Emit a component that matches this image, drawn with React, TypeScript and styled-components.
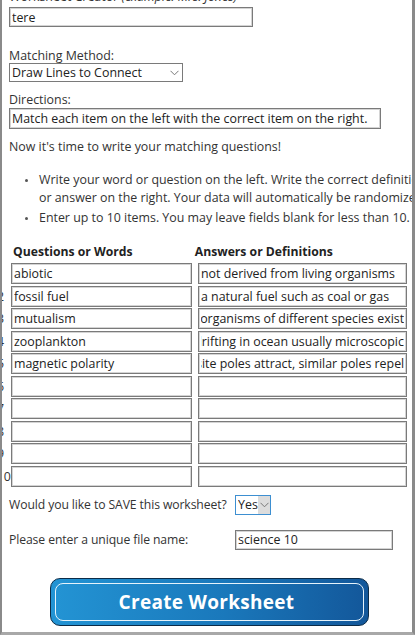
import React, { useLayoutEffect, useRef } from 'react';
import styled, { createGlobalStyle } from 'styled-components';

const GlobalStyle = createGlobalStyle`
  html, body {
    margin: 0;
    padding: 0;
    background: #fff;
    overflow: hidden;
  }
  body {
    font-family: "Open Sans", "Noto Sans", sans-serif;
    color: #333;
  }
`;

const Panel = styled.div`
  box-sizing: border-box;
  height: 635px;
  border-left: 2px solid #8a8a8a;
  border-right: 3px solid #8a8a8a;
  border-bottom: 3px solid #a8a8a8;
  padding-left: 7px;
  overflow: hidden;
  font-size: 12px;
`;

const Label = styled.div<{ $top?: number }>`
  font-size: 12.4px;
  line-height: 16px;
  color: #333;
  margin-top: ${p => p.$top ?? 0}px;
  white-space: nowrap;
`;

const Hint = styled.span`
  font-style: italic;
`;

const TextInput = styled.input<{ $w: number; $h?: number; $top?: number }>`
  display: block;
  box-sizing: border-box;
  width: ${p => p.$w}px;
  height: ${p => p.$h ?? 20}px;
  margin: ${p => p.$top ?? 0}px 0 0 0;
  padding: 0 2px;
  border: 1px solid #7a7a7a;
  box-shadow: inset 0 0 0 1px #d4d4d4;
  font-family: inherit;
  font-size: 12.4px;
  color: #222;
  background: #fff;
  outline: none;
`;

const SelectWrap = styled.div<{ $w: number; $top?: number; $focus?: boolean }>`
  position: relative;
  box-sizing: border-box;
  width: ${p => p.$w}px;
  margin-top: ${p => p.$top ?? 0}px;
  border: 1px solid ${p => (p.$focus ? '#3d8fd1' : '#7a7a7a')};
  background: #fff;
`;

const Select = styled.select<{ $h: number }>`
  appearance: none;
  display: block;
  width: 100%;
  height: ${p => p.$h}px;
  margin: 0;
  padding: 0 0 0 2px;
  border: none;
  background: transparent;
  font-family: inherit;
  font-size: 12.4px;
  color: #222;
  outline: none;
`;

const ArrowArea = styled.span<{ $shade?: boolean; $right?: number }>`
  position: absolute;
  top: 0;
  right: ${p => p.$right ?? 0}px;
  bottom: 0;
  width: 12px;
  display: flex;
  align-items: center;
  justify-content: center;
  background: ${p => (p.$shade ? '#dcdcdc' : 'transparent')};
  pointer-events: none;
`;

const Intro = styled.p`
  margin: 10px 0 0 0;
  font-size: 12.4px;
  line-height: 16px;
  white-space: nowrap;
`;

const Bullets = styled.ul`
  margin: 16px 0 0 0;
  padding: 0 0 0 30px;
  list-style: none;
`;

const Bullet = styled.li`
  position: relative;
  font-size: 12.4px;
  line-height: 18px;
  white-space: nowrap;
  margin-bottom: 2px;

  &::before {
    content: '';
    position: absolute;
    left: -14px;
    top: 8px;
    width: 3px;
    height: 3px;
    border-radius: 50%;
    background: #555;
  }
`;

const HeadRow = styled.div`
  display: flex;
  margin-top: 17px;
  line-height: 16px;
`;

const HeadCell = styled.div<{ $w: number; $pad: number }>`
  width: ${p => p.$w}px;
  padding-left: ${p => p.$pad}px;
  font-weight: 700;
  font-size: 12.2px;
  color: #222;
  white-space: nowrap;
`;

const Grid = styled.div`
  display: grid;
  grid-template-columns: 8px 181px 209px;
  column-gap: 6px;
  row-gap: 1.5px;
  margin: 3px 0 0 -12px;
`;

const Num = styled.div`
  font-size: 12.4px;
  line-height: 21px;
  color: #333;
  white-space: nowrap;
  letter-spacing: -0.3px;
`;

const CellInput = styled.input`
  box-sizing: border-box;
  width: 100%;
  height: 21px;
  margin: 0;
  padding: 0 2px;
  border: 1px solid #7a7a7a;
  box-shadow: inset 0 0 0 1px #d4d4d4;
  font-family: inherit;
  font-size: 12.4px;
  color: #222;
  background: #fff;
  outline: none;
`;

const FormRow = styled.div<{ $top: number }>`
  display: flex;
  align-items: center;
  margin-top: ${p => p.$top}px;
`;

const RowLabel = styled.div`
  width: 226px;
  font-size: 12.2px;
  line-height: 16px;
  letter-spacing: -0.1px;
  white-space: nowrap;
`;

const CreateButton = styled.button`
  display: block;
  box-sizing: border-box;
  width: 319px;
  height: 48px;
  margin: 28px 0 0 41px;
  padding: 4px;
  border: 1px solid #0c2c48;
  border-radius: 10px;
  background: linear-gradient(90deg, #2394d4 0%, #1a78bb 55%, #13579a 100%);
  cursor: pointer;
`;

const ButtonFace = styled.span`
  display: flex;
  align-items: center;
  justify-content: center;
  height: 100%;
  padding-right: 6px;
  border: 1.5px solid #e6f3fb;
  border-radius: 8px;
  box-sizing: border-box;
  font-family: "Open Sans", "Noto Sans", sans-serif;
  font-weight: 700;
  font-size: 19px;
  color: #fff;
  letter-spacing: 0.3px;
`;

const Chevron: React.FC = () => (
  <svg width="9" height="6" viewBox="0 0 9 6">
    <path d="M0.5 0.8 L4.5 4.8 L8.5 0.8" fill="none" stroke="#777" strokeWidth="1" />
  </svg>
);

const EndInput: React.FC<{ value: string }> = ({ value }) => {
  const ref = useRef<HTMLInputElement>(null);
  useLayoutEffect(() => {
    if (ref.current) ref.current.scrollLeft = ref.current.scrollWidth;
  }, [value]);
  return <CellInput ref={ref} defaultValue={value} />;
};

const items: [string, string][] = [
  ['abiotic', 'not derived from living organisms'],
  ['fossil fuel', 'a natural fuel such as coal or gas'],
  ['mutualism', 'relationship where two organisms of different species exist'],
  ['zooplankton', 'animals drifting in ocean usually microscopic'],
  ['magnetic polarity', 'opposite poles attract, similar poles repel'],
  ['', ''],
  ['', ''],
  ['', ''],
  ['', ''],
  ['', ''],
];

const App: React.FC = () => {
  return (
    <>
      <GlobalStyle />
      <Panel>
        <Label $top={-11}>
          Worksheet Creator <Hint>(example: Mrs. Jones)</Hint>
        </Label>
        <TextInput $w={244} $top={2} defaultValue="tere" />

        <Label $top={21}>Matching Method:</Label>
        <SelectWrap $w={174} $top={-1}>
          <Select $h={17} defaultValue="lines">
            <option value="lines">Draw Lines to Connect</option>
            <option value="letters">Write Letters</option>
          </Select>
          <ArrowArea $right={2}>
            <Chevron />
          </ArrowArea>
        </SelectWrap>

        <Label $top={10}>Directions:</Label>
        <TextInput
          $w={372}
          $h={21}
          defaultValue="Match each item on the left with the correct item on the right."
        />

        <Intro>Now it's time to write your matching questions!</Intro>
        <Bullets>
          <Bullet>
            Write your word or question on the left. Write the correct definition
            <br />
            or answer on the right. Your data will automatically be randomized.
          </Bullet>
          <Bullet>Enter up to 10 items. You may leave fields blank for less than 10.</Bullet>
        </Bullets>

        <HeadRow>
          <HeadCell $w={184} $pad={4}>Questions or Words</HeadCell>
          <HeadCell $w={220} $pad={0}>Answers or Definitions</HeadCell>
        </HeadRow>

        <Grid>
          {items.map(([q, a], i) => (
            <React.Fragment key={i}>
              <Num>{i + 1}</Num>
              <CellInput defaultValue={q} />
              <EndInput value={a} />
            </React.Fragment>
          ))}
        </Grid>

        <FormRow $top={8}>
          <RowLabel>Would you like to SAVE this worksheet?</RowLabel>
          <SelectWrap $w={36} $focus>
            <Select $h={18} defaultValue="yes">
              <option value="yes">Yes</option>
              <option value="no">No</option>
            </Select>
            <ArrowArea $shade>
              <Chevron />
            </ArrowArea>
          </SelectWrap>
        </FormRow>

        <FormRow $top={15}>
          <RowLabel>Please enter a unique file name:</RowLabel>
          <TextInput $w={158} defaultValue="science 10" />
        </FormRow>

        <CreateButton type="button">
          <ButtonFace>Create Worksheet</ButtonFace>
        </CreateButton>
      </Panel>
    </>
  );
};

export default App;
